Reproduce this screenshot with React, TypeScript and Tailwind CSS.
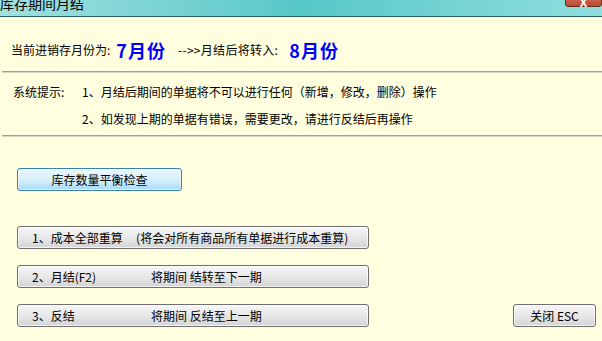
import React from "react";

const font = { fontFamily: '"Noto Sans CJK SC", "Noto Sans", sans-serif' };

function GrayBtn({ children, className = "" }: { children: React.ReactNode; className?: string }) {
  return (
    <div
      className={
        "h-[23px] rounded-[3px] border border-[#707070] bg-gradient-to-b from-[#f6f6f6] via-[#e8e8e8] to-[#d4d4d4] text-[12px] leading-[21px] text-black whitespace-pre shadow-[inset_0_0_0_1px_rgba(255,255,255,0.7)] " +
        className
      }
    >
      {children}
    </div>
  );
}

export default function App() {
  return (
    <div className="w-[602px] h-[341px] bg-[#ffffe0] overflow-hidden relative" style={font}>
      {/* Title bar */}
      <div className="h-[17px] border-b border-[#2e5e5e] bg-gradient-to-r from-[#9fe0e0] via-[#55c8c8] to-[#8fdede] relative overflow-hidden">
        <div className="absolute left-0 top-[-6px] text-[14px] leading-[18px] text-black">库存期间月结</div>
        <div className="absolute right-0 top-[-12px] w-[37px] h-[19px] rounded-[3px] border border-[#6a2a1a] bg-gradient-to-b from-[#e08a70] to-[#b84a30] flex items-end justify-center">
          <span className="text-white text-[12px] leading-[8px] font-bold">X</span>
        </div>
      </div>

      {/* Current month line */}
      <div className="mt-[23px] h-[20px] flex items-center pl-[11px] text-[12px] text-black">
        <span>当前进销存月份为:</span>
        <span className="ml-[6px] text-[18px] font-bold text-[#0000ff] tracking-[1px]">7月份</span>
        <span className="ml-[12px] tracking-[0.3px]">--&gt;&gt;月结后将转入:</span>
        <span className="ml-[11px] text-[18px] font-bold text-[#0000ff] tracking-[1px]">8月份</span>
      </div>

      {/* separator */}
      <div className="mt-[11px] ml-[2px] border-t border-[#a0a0a0] border-b border-b-[#d8d8d0]" />

      {/* hints */}
      <div className="mt-[9px] flex text-[12px] text-black">
        <div className="w-[82px] pl-[13px] h-[20px] leading-[20px]">系统提示:</div>
        <div className="flex flex-col gap-[7px]">
          <div className="h-[20px] leading-[20px]">1、月结后期间的单据将不可以进行任何（新增，修改，删除）操作</div>
          <div className="h-[20px] leading-[20px]">2、如发现上期的单据有错误，需要更改，请进行反结后再操作</div>
        </div>
      </div>

      {/* separator */}
      <div className="mt-[6px] ml-[2px] border-t border-[#a0a0a0] border-b border-b-[#d8d8d0]" />

      {/* buttons */}
      <div className="pl-[17px]">
        <div className="mt-[31px] w-[165px] h-[23px] rounded-[3px] border border-[#3c7fb1] bg-gradient-to-b from-[#eaf6fd] via-[#d9f0fc] to-[#a7d9f5] text-[12px] leading-[21px] text-center text-black shadow-[inset_0_0_0_1px_rgba(255,255,255,0.6)]">
          库存数量平衡检查
        </div>

        <GrayBtn className="mt-[35px] w-[352px] pl-[14px]">1、成本全部重算     (将会对所有商品所有单据进行成本重算)</GrayBtn>

        <GrayBtn className="mt-[16px] w-[352px] pl-[14px] flex">
          <span className="w-[119px]">2、月结(F2)</span>
          <span>将期间 结转至下一期</span>
        </GrayBtn>

        <div className="mt-[16px] flex items-start">
          <GrayBtn className="w-[352px] pl-[14px] flex">
            <span className="w-[119px]">3、反结</span>
            <span>将期间 反结至上一期</span>
          </GrayBtn>
          <GrayBtn className="ml-[144px] w-[83px] text-center">关闭 ESC</GrayBtn>
        </div>
      </div>
    </div>
  );
}
